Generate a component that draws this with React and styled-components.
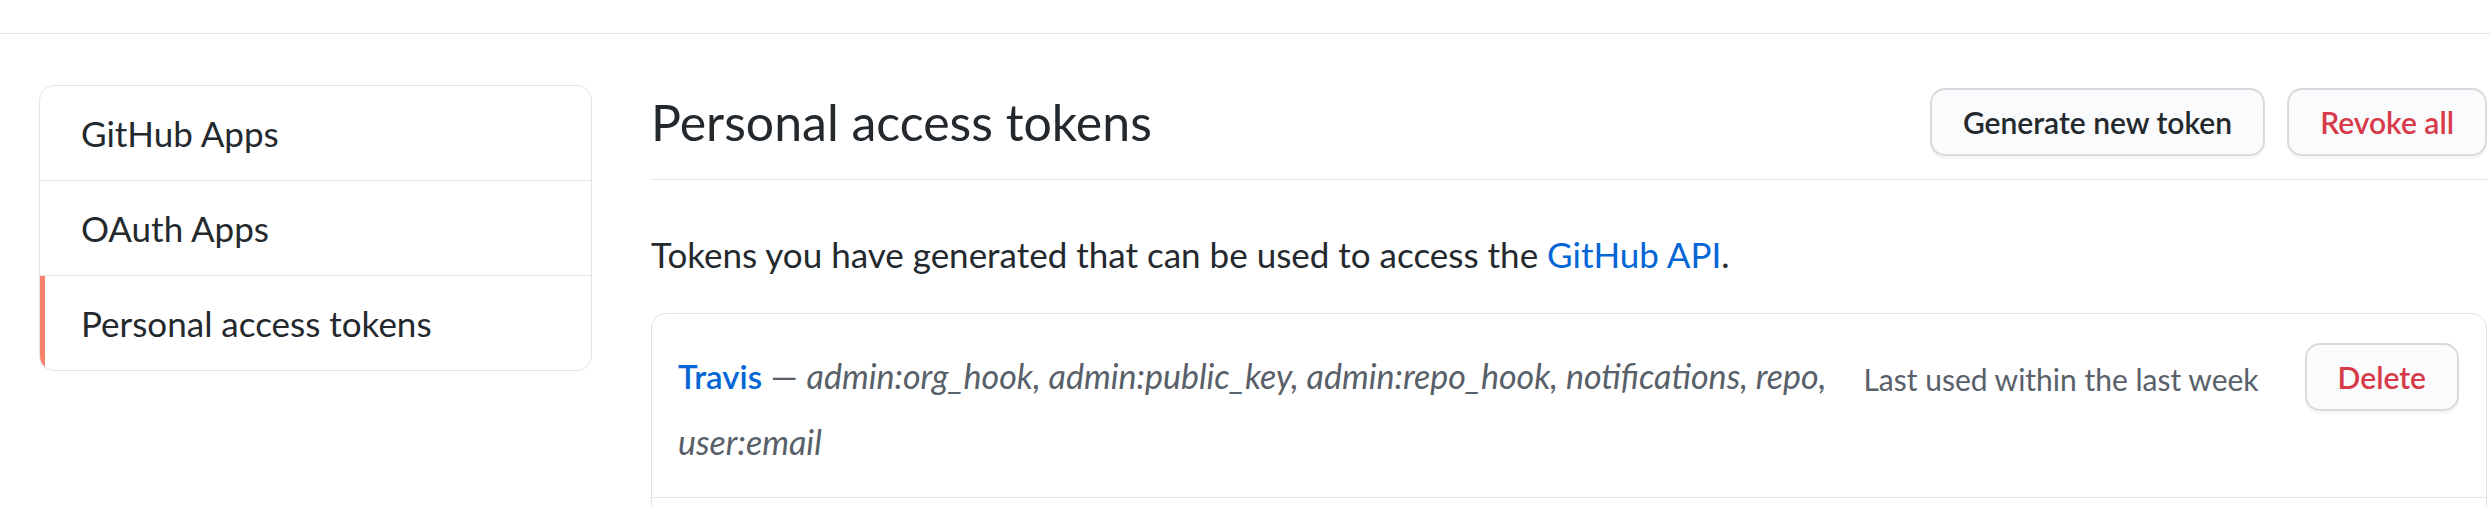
import React from "react"
import styled, { createGlobalStyle } from "styled-components"

const Global = createGlobalStyle`
  html, body {
    margin: 0;
    padding: 0;
    background: #fff;
    overflow: hidden;
  }
  body {
    font-family: Lato, "Liberation Sans", sans-serif;
    color: #24292e;
  }
`

const TopBar = styled.div`
  height: 33px;
  border-bottom: 1px solid #e1e4e8;
`

const Page = styled.div`
  display: flex;
  align-items: flex-start;
  gap: 59px;
  padding: 51px 3px 0 39px;
`

const Menu = styled.nav`
  width: 551px;
  flex-shrink: 0;
  border: 1px solid #e1e4e8;
  border-radius: 15px;
  overflow: hidden;
`

const MenuItem = styled.a`
  display: block;
  padding: 20px 41px;
  font-size: 35px;
  line-height: 54px;
  color: #24292e;
  text-decoration: none;
  box-shadow: ${(p) => (p.$active ? "inset 5px 0 0 #f9826c" : "none")};

  & + & {
    border-top: 1px solid #e1e4e8;
  }
`

const Main = styled.main`
  flex: 1;
  min-width: 0;
`

const Subhead = styled.div`
  display: flex;
  align-items: flex-start;
  padding: 3px 0 23px;
  border-bottom: 1px solid #e1e4e8;
`

const Title = styled.h2`
  flex: 1;
  margin: 0;
  font-size: 50px;
  font-weight: 400;
  line-height: 68px;
`

const Actions = styled.div`
  display: flex;
  gap: 22px;
`

const Button = styled.button`
  font-family: inherit;
  font-size: 30px;
  font-weight: 600;
  line-height: 50px;
  padding: 7px 31px;
  border: 2px solid #d8dadd;
  border-radius: 15px;
  background: #fafbfc;
  box-shadow: 0 3px 0 rgba(27, 31, 35, 0.04);
  color: ${(p) => (p.$danger ? "#d73a49" : "#24292e")};
  white-space: nowrap;
  cursor: pointer;
`

const Lead = styled.p`
  margin: 48px 0 0;
  font-size: 35px;
  line-height: 52.5px;
`

const Link = styled.a`
  color: #0366d6;
  text-decoration: none;
`

const Box = styled.div`
  margin-top: 32px;
  min-height: 260px;
  border: 1px solid #e1e4e8;
  border-radius: 15px;
`

const TokenRow = styled.div`
  display: flex;
  align-items: flex-start;
  padding: 29px 27px 23px 26px;
  border-bottom: 1px solid #e1e4e8;
`

const TokenText = styled.div`
  flex: 1;
  font-size: 34px;
  line-height: 65px;
  color: #586069;
`

const TokenName = styled.a`
  color: #0366d6;
  font-size: 33px;
  font-weight: 600;
  text-decoration: none;
`

const Scopes = styled.em`
  font-style: italic;
`

const LastUsed = styled.span`
  margin: 16px 46px 0 20px;
  font-size: 30px;
  line-height: 40px;
  color: #586069;
  white-space: nowrap;
`

export default function App() {
  const token = {
    name: "Travis",
    scopes: "admin:org_hook, admin:public_key, admin:repo_hook, notifications, repo, user:email",
    lastUsed: "Last used within the last week",
  }

  return (
    <>
      <Global />
      <TopBar />
      <Page>
        <Menu>
          <MenuItem href="#">GitHub Apps</MenuItem>
          <MenuItem href="#">OAuth Apps</MenuItem>
          <MenuItem href="#" $active>Personal access tokens</MenuItem>
        </Menu>
        <Main>
          <Subhead>
            <Title>Personal access tokens</Title>
            <Actions>
              <Button>Generate new token</Button>
              <Button $danger>Revoke all</Button>
            </Actions>
          </Subhead>
          <Lead>
            Tokens you have generated that can be used to access the <Link href="#">GitHub API</Link>.
          </Lead>
          <Box>
            <TokenRow>
              <TokenText>
                <TokenName href="#">{token.name}</TokenName> — <Scopes>{token.scopes}</Scopes>
              </TokenText>
              <LastUsed>{token.lastUsed}</LastUsed>
              <Button $danger>Delete</Button>
            </TokenRow>
          </Box>
        </Main>
      </Page>
    </>
  )
}
